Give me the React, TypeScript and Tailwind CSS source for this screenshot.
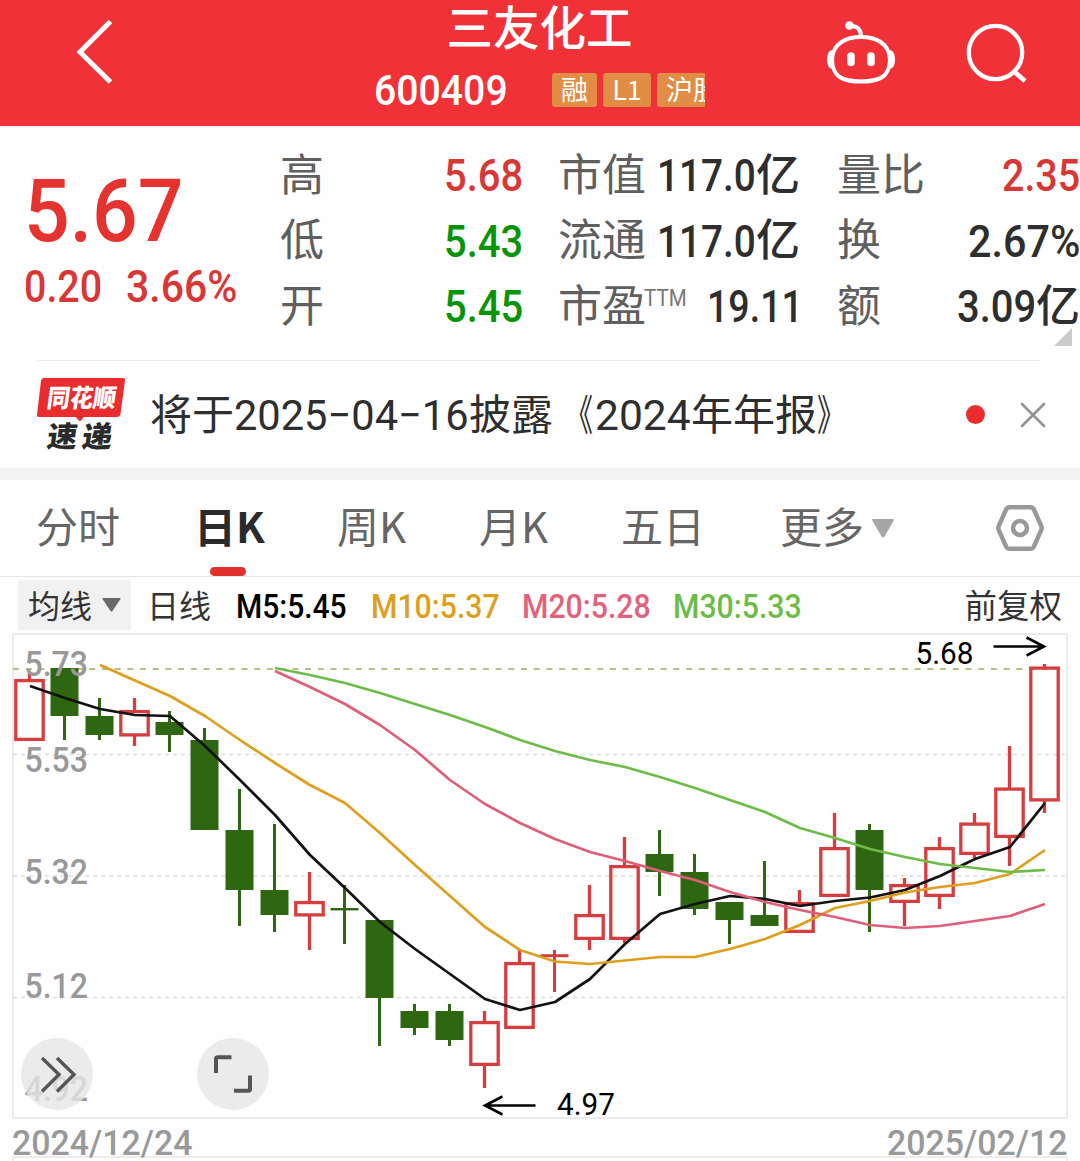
import { useLayoutEffect, useRef, type ReactNode } from 'react';

/* Stretches or condenses one line of text to the width given to its box. */
function Fit({ className, children }: { className: string; children: ReactNode }) {
  const box = useRef<HTMLSpanElement>(null);
  const text = useRef<HTMLSpanElement>(null);
  useLayoutEffect(() => {
    const fit = () => {
      if (!box.current || !text.current) return;
      const scale = box.current.clientWidth / text.current.offsetWidth;
      text.current.style.transform = `scaleX(${scale})`;
    };
    fit();
    document.fonts.ready.then(fit);
  }, []);
  return (
    <span ref={box} className={`block shrink-0 leading-none whitespace-nowrap ${className}`}>
      <span ref={text} className="inline-block origin-left whitespace-pre align-top">
        {children}
      </span>
    </span>
  );
}

const UP = 'text-[#d93636]';
const DOWN = 'text-[#089408]';
const CJK = "font-['Noto_Sans_CJK_SC',sans-serif]";

function Label({ children }: { children: ReactNode }) {
  return <span className={`${CJK} text-[44px] leading-none font-normal text-[#5f5f5f] pb-[8px] whitespace-nowrap`}>{children}</span>;
}

function Yi() {
  return <span className={`${CJK} text-[44px] leading-none font-medium pb-[8px]`}>亿</span>;
}

function Header() {
  return (
    <header className="flex h-[126px] bg-[#f03138] text-white">
      <div className="w-[374px] pl-[76px] pt-[19px]">
        <svg width="40" height="66" viewBox="0 0 40 66" fill="none" stroke="white" strokeWidth="5">
          <path d="M34.500 2.500 L4 33 L34.500 63" />
        </svg>
      </div>
      <div className="w-[331px]">
        <div className={`${CJK} text-[46.500px] leading-[49px] h-[66px] text-center font-medium`}>三友化工</div>
        <div className="flex h-[48px] items-center overflow-hidden">
          <Fit className="w-[134px] text-[43px] font-medium">600409</Fit>
          <div className={`ml-[44px] flex gap-[6px] text-[27px] leading-[32px] whitespace-nowrap ${CJK}`}>
            <span className="h-[34px] w-[45px] shrink-0 rounded-[3px] bg-[#e28d46] text-center">融</span>
            <span className="h-[34px] w-[48px] shrink-0 rounded-[3px] bg-[#e28d46] text-center">L1</span>
            <span className="h-[34px] w-[100px] shrink-0 rounded-[3px] bg-[#e28d46] pl-[9px]">沪股通</span>
          </div>
        </div>
      </div>
      <div className="flex pl-[121px] pt-[20px]">
        <svg width="70" height="66" viewBox="826 20 70 66" fill="none" stroke="white">
          <path d="M861 37 C877 37 893 43 893 60 C893 77 881 81.500 861 81.500 C841 81.500 829 77 829 60 C829 43 845 37 861 37 Z" strokeWidth="4.200" transform="translate(861 59) scale(.9 1) translate(-861 -59)" />
          <path d="M832 50 Q827 51 827 59.500 Q827 68 832 69 Z M890 50 Q895 51 895 59.500 Q895 68 890 69 Z" fill="white" stroke="none" />
          <circle cx="849.500" cy="25.500" r="4.300" fill="white" stroke="none" />
          <path d="M850 26 Q860.500 25.500 861 36" strokeWidth="4" />
          <path d="M851 56 V62.500 M871 56 V62.500" strokeWidth="7.500" strokeLinecap="round" />
        </svg>
        <svg className="ml-[69px]" width="64" height="66" viewBox="964 20 64 66" fill="none" stroke="white" strokeWidth="4.300">
          <circle cx="994.500" cy="52.500" r="26.700" />
          <path d="M1012.500 71 L1024 81" strokeWidth="4.800" />
        </svg>
      </div>
    </header>
  );
}

function Quote() {
  return (
    <section className="relative flex h-[234px] pt-[17px] text-[45px] font-medium text-[#2e2e2e]">
      <div className={`w-[280px] pl-[24px] pt-[25px]`}>
        <Fit className="w-[160px] text-[87px] text-[#e53330]">5.67</Fit>
        <div className={`mt-[9px] flex ${UP}`}>
          <Fit className="w-[78px]">0.20</Fit>
          <Fit className="ml-[24px] w-[111px]">3.66%</Fit>
        </div>
      </div>
      <div className="flex w-[243px] flex-col">
        {[
          ['高', '5.68', UP],
          ['低', '5.43', DOWN],
          ['开', '5.45', DOWN],
        ].map(([name, value, tone]) => (
          <div key={name} className="flex h-[65.500px] items-center justify-between">
            <Label>{name}</Label>
            <Fit className={`w-[79px] ${tone}`}>{value}</Fit>
          </div>
        ))}
      </div>
      <div className="ml-[35px] flex w-[242px] flex-col">
        {['市值', '流通'].map((name) => (
          <div key={name} className="flex h-[65.500px] items-center justify-between">
            <Label>{name}</Label>
            <div className="flex items-center">
              <Fit className="w-[99px]">117.0</Fit>
              <Yi />
            </div>
          </div>
        ))}
        <div className="flex h-[65.500px] items-center">
          <Label>市盈</Label>
          <Fit className="-ml-0.5 w-[43px] pb-[17px] text-[23px] font-normal text-[#777]">TTM</Fit>
          <Fit className="ml-[20px] w-[96px]">19.11</Fit>
        </div>
      </div>
      <div className="ml-[37px] flex w-[243px] flex-col">
        <div className="flex h-[65.500px] items-center justify-between">
          <Label>量比</Label>
          <Fit className={`w-[78px] ${UP}`}>2.35</Fit>
        </div>
        <div className="flex h-[65.500px] items-center justify-between">
          <Label>换</Label>
          <Fit className="w-[112px]">2.67%</Fit>
        </div>
        <div className="flex h-[65.500px] items-center justify-between">
          <Label>额</Label>
          <div className="flex items-center">
            <Fit className="w-[79px]">3.09</Fit>
            <Yi />
          </div>
        </div>
      </div>
      <svg className="absolute right-[8px] bottom-[14px]" width="18" height="18" viewBox="0 0 18 18">
        <path d="M18 0 V18 H0 Z" fill="#cbc9cb" />
      </svg>
    </section>
  );
}

function Notice() {
  return (
    <section className="h-[108px]">
      <div className="mr-[40px] ml-[37px] h-px bg-[#ececec]" />
      <div className="flex h-[107px] items-center pl-[36px] text-[#2e2e2e]">
        <svg className="mb-px" width="90" height="76" viewBox="36 376 90 76">
          <path d="M44 378 H123 Q125.500 378 125 380.500 L120.500 414 Q120 417 117 417 H84 L80 421.500 L75.500 417 H39 Q36.500 417 37 414.500 L41 381 Q41.500 378 44 378 Z" fill="#e92d2e" />
          <g fontFamily="'Noto Sans CJK SC', sans-serif" fontWeight="900">
            <text transform="translate(46 407) skewX(-8)" fontSize="25" fill="white" textLength="69" lengthAdjust="spacingAndGlyphs">同花顺</text>
            <text transform="translate(46 446.500) skewX(-8)" fontSize="29" fill="#2b2b2b" textLength="30" lengthAdjust="spacingAndGlyphs">速</text>
            <text transform="translate(81 446.500) skewX(-8)" fontSize="29" fill="#2b2b2b" textLength="30" lengthAdjust="spacingAndGlyphs">递</text>
          </g>
        </svg>
        <div className={`ml-[24px] flex items-center pt-px text-[42px] leading-none whitespace-nowrap ${CJK}`}>
          <span className="pb-[6px]">将于</span>
          <Fit className="w-[235px] font-['Roboto',sans-serif] text-[43px]">2025−04−16</Fit>
          <span className="pb-[6px]">披露</span>
          <Fit className="mr-[2px] ml-[12px] w-[28px] pb-[6px]">《</Fit>
          <Fit className="w-[96px] font-['Roboto',sans-serif] text-[43px]">2024</Fit>
          <span className="pb-[6px]">年年报</span>
          <Fit className="w-[28px] pb-[6px]">》</Fit>
        </div>
        <div className="ml-[121px] size-[19px] rounded-full bg-[#e92d2e]" />
        <svg className="ml-[35px]" width="26" height="26" viewBox="0 0 26 26" stroke="#929292" strokeWidth="2.600" strokeLinecap="round">
          <path d="M2 2 L24 24 M24 2 L2 24" />
        </svg>
      </div>
    </section>
  );
}

function Tabs() {
  return (
    <nav className={`flex h-[97px] border-b border-[#e6e6e6] text-[42px] leading-[89px] whitespace-nowrap text-[#666] ${CJK}`}>
      <span className="ml-[36px] w-[158px]">分时</span>
      <div className="flex w-[143px] flex-col font-bold text-[#2b2b2b]">
        <span className="h-[87px]">日K</span>
        <span className="ml-[16px] h-[9px] w-[36px] rounded-full bg-[#e0312d]" />
      </div>
      <span className="w-[142px]">周K</span>
      <span className="w-[142px]">月K</span>
      <span className="w-[159px]">五日</span>
      <span className="w-[92px]">更多</span>
      <svg className="mt-[39px]" width="22" height="19" viewBox="0 0 22 19">
        <path d="M1 0 H21 Q22.500 0 21.500 2 L12.500 17.500 Q11 19.500 9.500 17.500 L0.500 2 Q-.5 0 1 0 Z" fill="#a6a6a6" />
      </svg>
      <svg className="ml-[101px] mt-[24px]" width="50" height="48" viewBox="995 504 50 48" fill="none" stroke="#999" strokeWidth="4.500">
        <path d="M1009 507.300 H1031 Q1032.700 507.300 1033.700 509 L1041.300 526 Q1042 528 1041.300 530 L1033.700 547 Q1032.700 548.800 1031 548.800 H1009 Q1007.300 548.800 1006.300 547 L998.700 530 Q998 528 998.700 526 L1006.300 509 Q1007.300 507.300 1009 507.300 Z" />
        <circle cx="1020" cy="528" r="7" />
      </svg>
    </nav>
  );
}

function Averages() {
  return (
    <div className={`flex h-[56px] items-start pt-[3px] pl-[18px] text-[32px] text-[#333] ${CJK}`}>
      <div className="flex h-[50px] w-[113px] items-center bg-[#f1f1f1] pl-[10px]">
        <span className="pb-[3px] leading-none">均线</span>
        <svg className="ml-[10px]" width="19" height="14" viewBox="0 0 19 14">
          <path d="M1 0 H18 Q19 0 18.300 1.300 L10.500 13 Q9.500 14 8.500 13 L.7 1.300 Q0 0 1 0 Z" fill="#6a6a6a" />
        </svg>
      </div>
      <div className="flex h-[53px] grow items-center">
        <span className="ml-[16px] w-[89px] pb-[6px] leading-none">日线</span>
        <div className="flex h-[53px] items-center gap-[22px] pt-px font-['Roboto',sans-serif] text-[33.500px] font-medium">
          <Fit className="w-[111px] text-black">M5:5.45</Fit>
          <Fit className="ml-[2px] w-[129px] text-[#dd9f1c]">M10:5.37</Fit>
          <Fit className="w-[129px] text-[#e2627c]">M20:5.28</Fit>
          <Fit className="w-[129px] text-[#6dbc48]">M30:5.33</Fit>
        </div>
        <span className="ml-auto mr-[18px] pb-[4px] text-[32.500px] leading-none">前复权</span>
      </div>
    </div>
  );
}

/* Each candle: rising?, body top, body bottom, wick top, wick bottom. */
const candles: [boolean, number, number, number, number][] = [
  [true, 679, 741, 672, 741], [false, 668, 716, 668, 740], [false, 716, 735, 698, 740],
  [true, 710, 736.5, 698, 746], [false, 722, 735, 711, 752], [false, 740, 830, 728, 830],
  [false, 830, 890, 789, 926], [false, 890, 915, 824, 932], [true, 901, 916.5, 872, 950],
  [false, 908, 910.4, 885, 944], [false, 920, 998, 920, 1046], [false, 1011, 1028, 1004, 1035],
  [false, 1011, 1040, 1004, 1046], [true, 1021, 1066, 1011, 1088], [true, 962, 1029, 950, 1029],
  [true, 954.2, 957.2, 950, 992], [true, 914, 940, 885, 950], [true, 865, 940, 837, 943],
  [false, 854, 872, 830, 896], [false, 872, 909, 854, 915], [false, 902, 920, 902, 944],
  [false, 915, 926, 861, 926], [true, 902, 933, 890, 933], [true, 847, 897, 813, 897],
  [false, 830, 890, 824, 932], [true, 884, 903, 878, 926], [true, 847, 897, 837, 909],
  [true, 822.5, 855, 813, 858], [true, 787.5, 838, 746, 866], [true, 666.5, 801.5, 664, 813],
];

const averages: { color: string; from: number; ys: number[] }[] = [
  { color: '#111', from: 0, ys: [686, 698, 709, 715, 716, 746, 780, 815, 855, 888, 922, 949, 974, 999, 1010, 1002, 979, 944, 914, 904, 896, 899, 906, 901, 897.5, 890, 876, 859, 847, 803] },
  { color: '#dd9f1c', from: 2, ys: [665, 680.5, 696, 716, 740, 763, 785, 803, 833, 865, 896, 927, 950, 961.5, 964, 960.5, 957, 957, 949, 939, 925, 908, 901, 892.5, 887, 883, 874, 850] },
  { color: '#6dbc48', from: 7, ys: [668, 675, 683, 693, 704, 715, 727, 740, 751, 760, 767, 777, 788, 800, 812, 828, 838, 849, 857, 864, 868, 872, 870] },
  { color: '#de5f79', from: 7, ys: [671, 687, 704, 725, 750, 780, 804, 823, 839, 852, 861, 871, 880, 892, 902, 910, 917, 925, 928, 926, 921, 916, 904] },
];

const prices: [string, number][] = [['5.73', 676], ['5.53', 772], ['5.32', 884], ['5.12', 997.5], ['4.92', 1101]];

function Chart() {
  return (
    <svg className="block" width="1080" height="486" viewBox="0 633 1080 486" fontFamily="Roboto, sans-serif">
      <rect x="13" y="634" width="1054" height="484" fill="none" stroke="#ebebeb" strokeWidth="2" />
      <g strokeWidth="1.300" stroke="#dedede" strokeDasharray="4 4">
        <path d="M13 754.500 H1065 M13 876 H1065 M13 997.500 H1065" />
      </g>
      <path d="M13 669 H1062" stroke="#a8a95c" strokeWidth="1.700" strokeDasharray="6 6.700" />
      {candles.map(([rising, top, bottom, high, low], i) => {
        const x = 29.5 + 35 * i;
        if (!rising || bottom - top < 5) {
          return (
            <g key={i} fill={rising ? '#cf3f40' : '#2f6612'}>
              <rect x={x - 14} y={top} width={28} height={bottom - top} />
              <rect x={x - 1.5} y={high} width={3} height={low - high} />
            </g>
          );
        }
        return (
          <g key={i} stroke="#d43e3f" strokeWidth="3.300" fill="none">
            <path d={`M${x} ${high} V${top + 1} M${x} ${bottom - 1} V${low}`} />
            <rect x={x - 13.7} y={top + 1.6} width={27.4} height={bottom - top - 3.2} />
          </g>
        );
      })}
      {averages.map(({ color, from, ys }) => (
        <polyline key={color} points={ys.map((y, i) => `${30 + 35 * (from + i)},${y}`).join(' ')} fill="none" stroke={color} strokeWidth="2.700" strokeLinejoin="round" />
      ))}
      <g fontSize="35" fontWeight="500" fill="#999">
        {prices.map(([p, y]) => (
          <text key={p} x="24.500" y={y} textLength="63.500" lengthAdjust="spacingAndGlyphs">{p}</text>
        ))}
      </g>
      <g fontSize="31" fill="black">
        <text x="915.500" y="664" textLength="58" lengthAdjust="spacingAndGlyphs">5.68</text>
        <text x="557" y="1115" textLength="58" lengthAdjust="spacingAndGlyphs">4.97</text>
      </g>
      <g fill="none" stroke="black" strokeWidth="2.600">
        <path d="M993.500 646.500 H1044 M1026.500 637.500 L1044 646.500 L1026.500 655.500" />
        <path d="M535.500 1105.500 H485 M502.500 1096.500 L485 1105.500 L502.500 1114.500" />
      </g>
      <circle cx="57" cy="1074" r="36" fill="#e6e6e6" fillOpacity="0.800" />
      <circle cx="233" cy="1074" r="36" fill="#ebebeb" />
      <g fill="none" stroke="#555" strokeWidth="3.400">
        <path d="M42 1058 L59 1074.500 L42 1091.500 M57 1058 L74 1074.500 L57 1091.500" />
        <path d="M216 1073 V1059 Q216 1057.300 217.700 1057.300 H231.500 M250 1075.500 V1089 Q250 1090.800 248.300 1090.800 H234" strokeWidth="4" />
      </g>
    </svg>
  );
}

export default function App() {
  return (
    <main className="h-[1161px] w-[1080px] overflow-hidden bg-[#fefefe] font-['Roboto','Noto_Sans_CJK_SC',sans-serif]">
      <Header />
      <Quote />
      <Notice />
      <div className="h-[12px] bg-[#f3f3f3]" />
      <Tabs />
      <Averages />
      <Chart />
      <div className="flex h-[37px] items-center justify-between pt-[12px] pr-[13px] pl-[12px] text-[35px] font-medium text-[#999]">
        <Fit className="w-[180px]">2024/12/24</Fit>
        <Fit className="w-[180px]">2025/02/12</Fit>
      </div>
      <div className="mx-[12px] h-[10px] border-2 border-[#ededed]" />
    </main>
  );
}
